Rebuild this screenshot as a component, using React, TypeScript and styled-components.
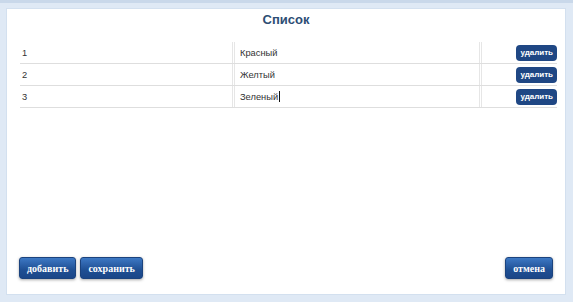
import React from 'react';
import styled, { createGlobalStyle } from 'styled-components';

const GlobalStyle = createGlobalStyle`
  html, body {
    margin: 0;
    padding: 0;
    background: #dfe9f5;
  }
  body {
    font-family: 'Liberation Sans', Arial, sans-serif;
  }
`;

const Frame = styled.div`
  width: 573px;
  height: 302px;
  box-sizing: border-box;
  padding: 5px 7px 7px 6px;
  border-top: 3px solid #c9d8ea;
  display: flex;
`;

const Panel = styled.div`
  flex: 1;
  background: #ffffff;
  border: 1px solid #d3e0ef;
  display: flex;
  flex-direction: column;
`;

const Title = styled.h2`
  margin: 3px 0 0;
  text-align: center;
  font-size: 13px;
  line-height: 16px;
  font-weight: bold;
  color: #2d4d74;
`;

const Table = styled.div`
  margin: 14px 8px 0 13px;
  display: flex;
  flex-direction: column;
`;

const Row = styled.div`
  display: grid;
  grid-template-columns: 212px 247px 1fr;
  height: 21px;
  border-bottom: 1px solid #dedede;
  align-items: center;
`;

const Cell = styled.div<{ $divider?: boolean }>`
  height: 100%;
  display: flex;
  align-items: center;
  box-sizing: border-box;
  padding-left: ${(p) => (p.$divider ? '5px' : '2px')};
  border-left: ${(p) => (p.$divider ? '3px double #e6e6e6' : 'none')};
  font-size: 9.3px;
  color: #333333;
`;

const ActionCell = styled(Cell)`
  justify-content: flex-end;
  padding-right: 0;
`;

const Caret = styled.span`
  display: inline-block;
  width: 1px;
  height: 11px;
  background: #111;
  margin-left: 1px;
`;

const DeleteButton = styled.button`
  border: none;
  border-radius: 4px;
  background: #1f4784;
  color: #ffffff;
  font-family: 'Liberation Sans', Arial, sans-serif;
  font-size: 8px;
  font-weight: bold;
  height: 16px;
  padding: 0 4px;
  cursor: pointer;
`;

const Spacer = styled.div`
  flex: 1;
`;

const Footer = styled.div`
  display: flex;
  align-items: center;
  gap: 4px;
  padding: 0 12px 15px 12px;
`;

const ActionButton = styled.button<{ $push?: boolean }>`
  margin-left: ${(p) => (p.$push ? 'auto' : '0')};
  border: 1px solid #1b437e;
  border-radius: 3px;
  height: 22px;
  padding: 0 7px;
  background: linear-gradient(#3d78c4, #1f4f93 60%, #1a4688);
  color: #ffffff;
  font-family: 'Liberation Serif', 'Times New Roman', serif;
  font-size: 10px;
  font-weight: bold;
  box-shadow: 0 1px 3px rgba(0, 0, 0, 0.35);
  cursor: pointer;
`;

const items = [
  { id: 1, name: 'Красный' },
  { id: 2, name: 'Желтый' },
  { id: 3, name: 'Зеленый', focused: true },
];

export default function App() {
  return (
    <>
      <GlobalStyle />
      <Frame>
        <Panel>
          <Title>Список</Title>
          <Table>
            {items.map((item) => (
              <Row key={item.id}>
                <Cell>{item.id}</Cell>
                <Cell $divider>
                  {item.name}
                  {item.focused && <Caret />}
                </Cell>
                <ActionCell $divider>
                  <DeleteButton>удалить</DeleteButton>
                </ActionCell>
              </Row>
            ))}
          </Table>
          <Spacer />
          <Footer>
            <ActionButton>добавить</ActionButton>
            <ActionButton>сохранить</ActionButton>
            <ActionButton $push>отмена</ActionButton>
          </Footer>
        </Panel>
      </Frame>
    </>
  );
}
